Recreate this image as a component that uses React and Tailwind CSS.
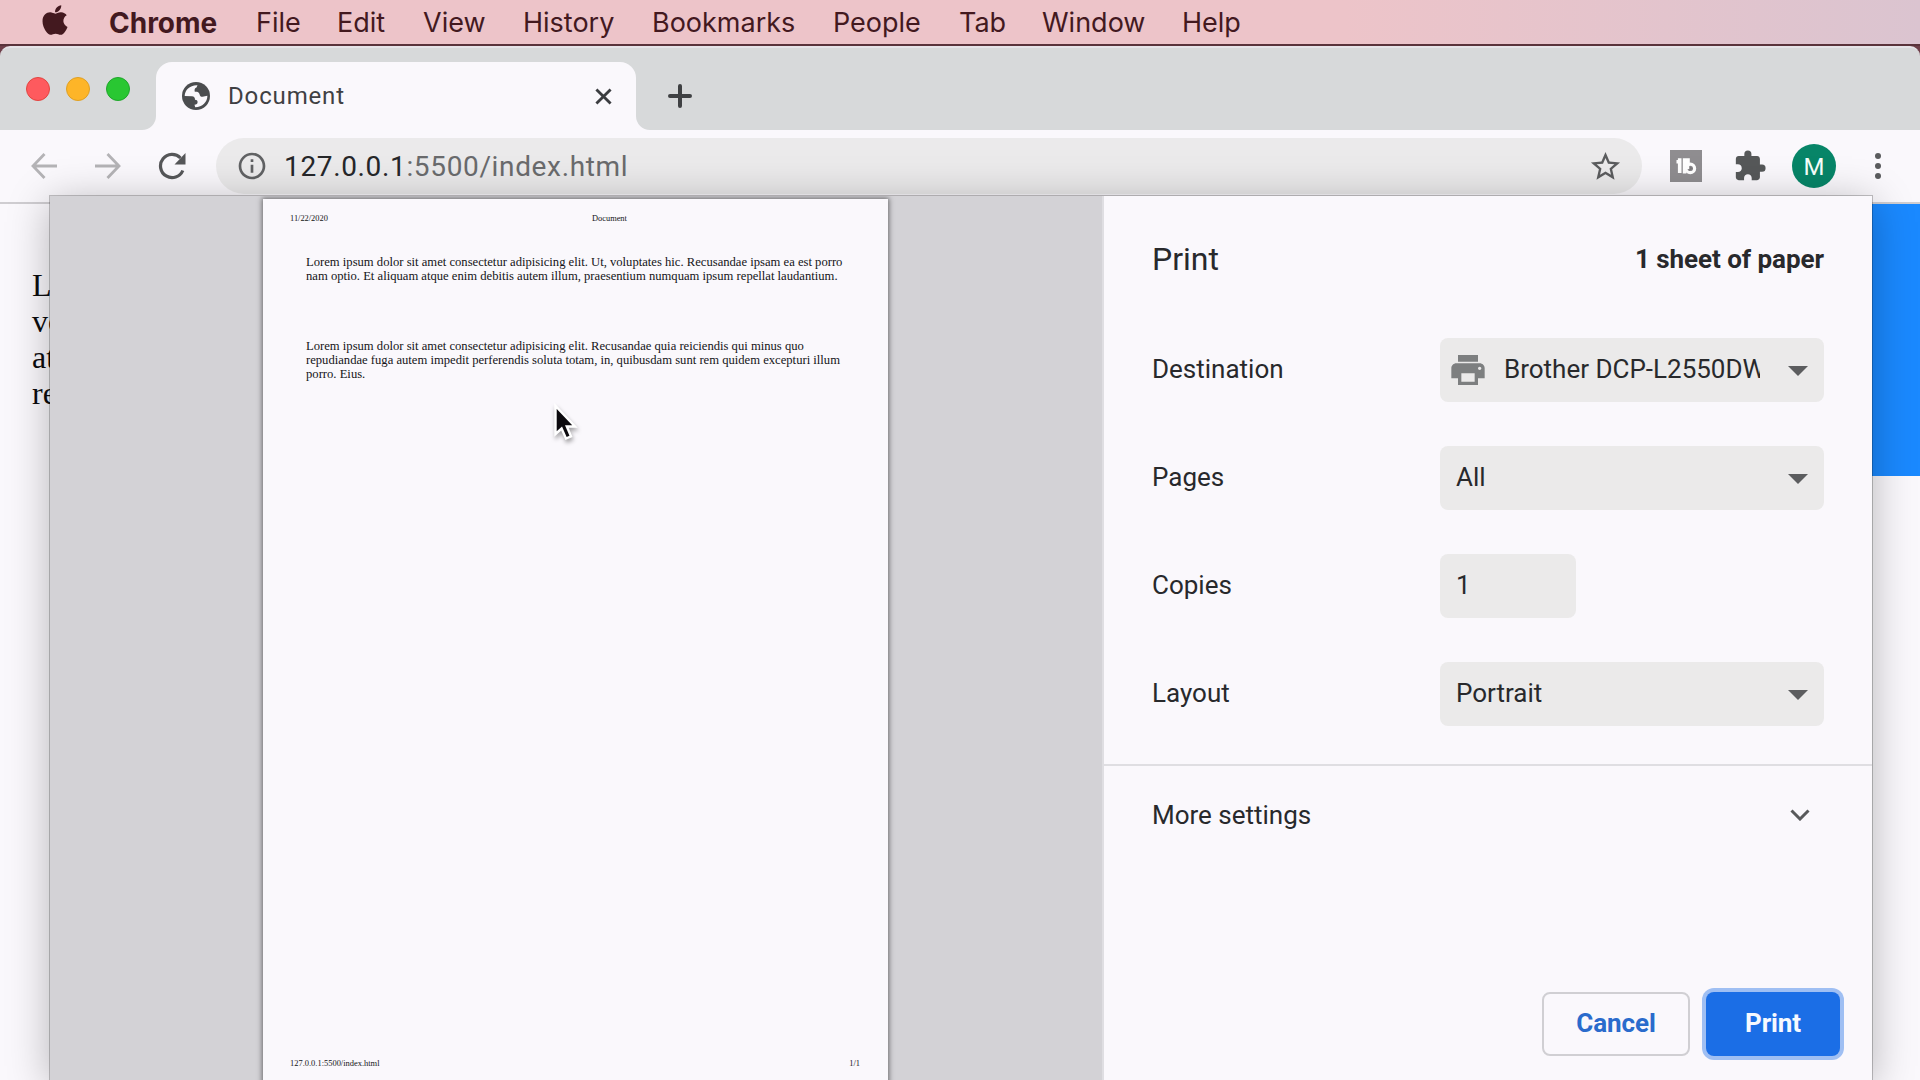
import React from "react";
import { FaApple } from "react-icons/fa";
import { MdPrint, MdExtension, MdStarBorder, MdInfoOutline } from "react-icons/md";

const MENU = [
  ["File", "w-[81px]"],
  ["Edit", "w-[86px]"],
  ["View", "w-[100px]"],
  ["History", "w-[129px]"],
  ["Bookmarks", "w-[181px]"],
  ["People", "w-[126px]"],
  ["Tab", "w-[83px]"],
  ["Window", "w-[140px]"],
  ["Help", "w-[80px]"],
];

function MenuBar() {
  return (
    <header className="flex h-[46px] items-center border-b-2 border-[#5a333b] bg-linear-to-r from-[#edc4c9] from-70% to-[#dbc4d0] pl-[42px] font-['Inter'] text-[27px] leading-none text-[#43191f]">
      <FaApple className="-mt-[5px] h-[34px] w-[26px]" />
      <span className="ml-[41px] w-[147px] pt-px text-[28px] font-bold">Chrome</span>
      {MENU.map(([label, width]) => (
        <span key={label} className={`${width} shrink-0 pt-px whitespace-nowrap`}>{label}</span>
      ))}
    </header>
  );
}

function TabStrip() {
  return (
    <div className="flex h-[84px] items-end rounded-t-[10px] border-t-2 border-[#e6e4e8] bg-[#d7d9da]">
      <div className="flex h-full w-[142px] gap-4 pt-[29px] pl-[26px]">
        <span className="size-6 rounded-full border border-[#e2453f] bg-[#fe5a5e]" />
        <span className="size-6 rounded-full border border-[#dfa023] bg-[#fdb528]" />
        <span className="size-6 rounded-full border border-[#1fa62b] bg-[#29c732]" />
      </div>
      <svg className="size-3.5" viewBox="0 0 14 14"><path d="M14 0A14 14 0 0 1 0 14H14Z" fill="#faf8fc" /></svg>
      <div className="flex h-[68px] w-[480px] items-center rounded-t-2xl bg-[#faf8fc] pl-[26px]">
        <svg className="size-7 shrink-0" viewBox="0 0 28 28">
          <circle cx="14" cy="14" r="14" fill="#4b4d4f" />
          <path d="M2.700 14C2.800 8 8 2.800 15.500 3.200L14.500 5.500C12.800 6 12.200 7.500 12.800 9.800C15 9.600 17 10 17.500 12C17.800 14 18.800 14.800 20.500 14.800C22.500 14.800 23.500 13.800 25.400 13.800C25.400 20 20.500 25.200 13.200 25.200L12.500 22.800C14.500 22.800 15.600 21.800 15.600 20C15.600 18.400 14.500 18 13 17.800C13 15.500 12 14.300 10 14.300Z" fill="#faf8fc" />
        </svg>
        <span className="ml-[18px] w-[367px] font-['Roboto'] text-[24px] leading-none tracking-[0.85px] text-[#3f4043]">Document</span>
        <svg className="size-[17px] shrink-0" viewBox="0 0 18 18" stroke="#3b3d40" strokeWidth="3"><path d="M1.500 1.500 16.500 16.500M16.500 1.500 1.500 16.500" /></svg>
      </div>
      <svg className="size-3.5" viewBox="0 0 14 14"><path d="M0 0A14 14 0 0 0 14 14H0Z" fill="#faf8fc" /></svg>
      <svg className="mb-[22px] ml-[18px] size-6" viewBox="0 0 24 24" stroke="#3f4143" strokeWidth="4" strokeLinecap="round"><path d="M12 2V22M2 12H22" /></svg>
    </div>
  );
}

function Toolbar() {
  return (
    <div className="flex h-[74px] items-start border-b-2 border-[#cfcdd1] bg-[#faf8fc] pt-2">
      <div className="flex h-14 w-[216px] shrink-0 items-center pl-[31px]">
        <svg className="h-[26px] w-[26px]" viewBox="0 0 26 26" fill="none" stroke="#b4b3b6" strokeWidth="2.800"><path d="M26 13H2M13.500 1 2 13 13.500 25" /></svg>
        <svg className="ml-[38px] h-[26px] w-[26px]" viewBox="0 0 26 26" fill="none" stroke="#b4b3b6" strokeWidth="2.800"><path d="M0 13H24M12.500 1 24 13 12.500 25" /></svg>
        <svg className="ml-[37px] size-7" viewBox="0 0 28 28" fill="none" stroke="#565759" strokeWidth="3.200">
          <path d="M24.800 18.500A11.600 11.600 0 1 1 22.500 6" />
          <path d="M27.500 1V12.500H16.500Z" fill="#565759" stroke="none" />
        </svg>
      </div>
      <div className="flex h-14 w-[1426px] items-center rounded-full bg-[#ebeaeb] pl-5 font-['Roboto'] text-[28px] leading-none">
        <MdInfoOutline className="size-8 text-[#616264]" />
        <span className="ml-4 w-[1304px] pt-0.5 tracking-[0.65px] text-[#6a6b6d]"><span className="text-[#26272a]">127.0.0.1</span>:5500/index.html</span>
        <MdStarBorder className="size-[35px] shrink-0 text-[#5b5c5e]" />
      </div>
      <div className="flex h-14 items-center pl-7">
        <svg className="size-8" viewBox="0 0 32 32">
          <rect width="32" height="32" fill="#8f8d90" />
          <path d="M6.500 11.700H11.500M9.700 8.300V23M14.600 8.300V23.500M18 8.300V19" stroke="#fff" strokeWidth="3.600" fill="none" />
          <circle cx="20.300" cy="18.400" r="4.300" fill="none" stroke="#fff" strokeWidth="3.200" />
          <path d="M19.300 15.800V21L23 18.400Z" fill="#7b797c" />
        </svg>
        <MdExtension className="ml-[31px] size-[34px] text-[#565859]" />
        <span className="ml-[25px] flex size-11 items-center justify-center rounded-full bg-[#078568] pt-0.5 font-['Roboto'] text-[24px] leading-none text-[#f5fffb]">M</span>
        <span className="ml-[39px] flex flex-col gap-1">
          <i className="size-1.5 rounded-full bg-[#5b5c5e]" />
          <i className="size-1.5 rounded-full bg-[#5b5c5e]" />
          <i className="size-1.5 rounded-full bg-[#5b5c5e]" />
        </span>
      </div>
    </div>
  );
}

function WebPage() {
  return (
    <main className="flex h-[876px] items-start justify-between bg-[#faf8fc]">
      <div className="w-[300px] pt-[63px] pl-8 font-['Liberation_Serif'] text-[32px] leading-9 text-[#0c0c0e]">
        <p>Lorem</p>
        <p>voluptates</p>
        <p>atque</p>
        <p>repellat</p>
      </div>
      <div className="h-[272px] w-[600px] bg-[#1a89ff]" />
    </main>
  );
}

function Sheet() {
  return (
    <article className="ml-[213px] mt-[3px] flex h-[890px] w-[625px] flex-col bg-[#faf8fc] px-[27px] font-['Liberation_Serif'] text-[#141417] shadow-[0_0_5px_1px_rgba(0,0,0,0.5)]">
      <div className="flex h-[38px] items-center pt-0.5 text-[8.400px] leading-none">
        <span className="w-[302px]">11/22/2020</span>
        <span>Document</span>
      </div>
      <div className="ml-4 pt-[18px] text-[12.640px] leading-[14px] whitespace-nowrap">
        <p>Lorem ipsum dolor sit amet consectetur adipisicing elit. Ut, voluptates hic. Recusandae ipsam ea est porro</p>
        <p>nam optio. Et aliquam atque enim debitis autem illum, praesentium numquam ipsum repellat laudantium.</p>
        <div className="h-14" />
        <p>Lorem ipsum dolor sit amet consectetur adipisicing elit. Recusandae quia reiciendis qui minus quo</p>
        <p>repudiandae fuga autem impedit perferendis soluta totam, in, quibusdam sunt rem quidem excepturi illum</p>
        <p>porro. Eius.</p>
      </div>
      <div className="mt-auto mb-[18px] flex items-center justify-between pr-px text-[8.450px] leading-[16px]">
        <span>127.0.0.1:5500/index.html</span>
        <span>1/1</span>
      </div>
    </article>
  );
}

function Arrow() {
  return <svg className="mt-0.5 ml-auto h-2.5 w-5 shrink-0" viewBox="0 0 20 10"><path d="M0 0H20L10 10Z" fill="#5c5d5f" /></svg>;
}

function Row({ label, children }) {
  return (
    <div className="flex h-[108px] items-start">
      <span className="flex h-16 w-[288px] items-center pb-0.5">{label}</span>
      {children}
    </div>
  );
}

function Settings() {
  const field = "flex h-16 items-center rounded-lg bg-[#ebeaea] pr-4 pl-4";
  return (
    <section className="flex h-full w-[770px] flex-col border-l-2 border-[#dfdee2] bg-[#faf8fc] font-['Roboto'] text-[26px] leading-none text-[#28292c]">
      <div className="flex h-[142px] items-start justify-between pt-[47px] pr-12 pl-12">
        <h1 className="text-[32px] leading-[32px]">Print</h1>
        <span className="pt-[3px] text-[26px] font-bold tracking-[-0.05px]">1 sheet of paper</span>
      </div>
      <div className="h-[426px] pl-12">
        <Row label="Destination">
          <div className="flex h-16 w-[384px] items-center rounded-lg bg-[#ebeaea] pr-4 pl-2">
            <MdPrint className="size-10 shrink-0 text-[#7d7f80]" />
            <span className="ml-4 w-[256px] overflow-hidden pb-0.5 leading-8 whitespace-nowrap">Brother DCP-L2550DW</span>
            <Arrow />
          </div>
        </Row>
        <Row label="Pages"><div className={`${field} w-[384px]`}><span className="pb-0.5">All</span><Arrow /></div></Row>
        <Row label="Copies"><div className={`${field} w-[136px]`}><span className="pb-0.5">1</span></div></Row>
        <Row label="Layout"><div className={`${field} w-[384px]`}><span className="pb-0.5">Portrait</span><Arrow /></div></Row>
      </div>
      <div className="flex h-[102px] items-center justify-between border-t-2 border-[#dfdee2] pr-[62px] pb-0.5 pl-12">
        <span>More settings</span>
        <svg className="h-3 w-5" viewBox="0 0 20 12" fill="none" stroke="#58595b" strokeWidth="3"><path d="M1.500 1.500 10 10 18.500 1.500" /></svg>
      </div>
      <div className="mt-auto flex justify-end gap-4 pr-8 pb-6 font-bold tracking-[-0.1px]">
        <button className="h-16 w-[148px] rounded-lg border-2 border-[#d0cfd3] pb-0.5 text-[#2a6bcc]">Cancel</button>
        <button className="h-16 w-[134px] rounded-lg bg-[#1b6ee6] pb-0.5 text-[#f6f9ff] ring-4 ring-[#9fbff3]">Print</button>
      </div>
    </section>
  );
}

export default function App() {
  return (
    <div className="relative h-[1080px] w-[1920px] overflow-hidden bg-[#6d3f49]">
      <MenuBar />
      <TabStrip />
      <Toolbar />
      <WebPage />
      <div className="absolute top-[196px] left-[50px] flex h-[884px] w-[1822px] shadow-[0_0_0_1px_rgba(0,0,0,0.22),0_6px_40px_rgba(0,0,0,0.28)]">
        <div className="h-full w-[1052px] overflow-hidden bg-[#d3d2d6]"><Sheet /></div>
        <Settings />
      </div>
      <svg className="absolute top-[403px] left-[552px] h-[42px] w-[28px] drop-shadow-[1px_3px_2px_rgba(0,0,0,0.35)]" viewBox="0 0 28 42">
        <path d="M3.500 3V31L9.600 25.500L14 35.500L19 33.300L14.800 23.500H23Z" fill="#0c0a0e" stroke="#fff" strokeWidth="2.400" />
      </svg>
    </div>
  );
}
